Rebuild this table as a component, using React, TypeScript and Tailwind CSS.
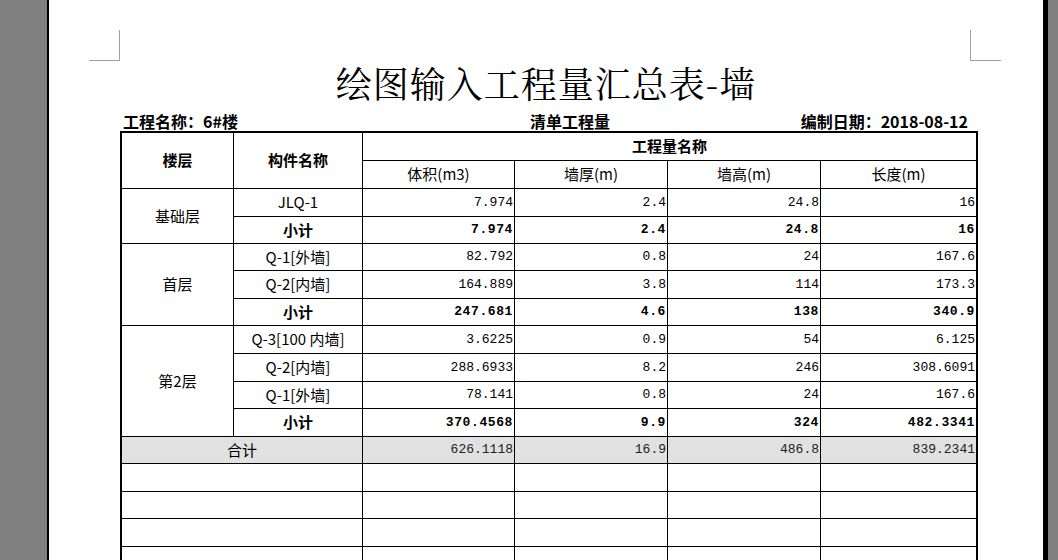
import React from 'react';

type Floor = {
  name: string;
  items: { part: string; values: string[] }[];
  subtotal: string[];
};

const floors: Floor[] = [
  {
    name: '基础层',
    items: [{ part: 'JLQ-1', values: ['7.974', '2.4', '24.8', '16'] }],
    subtotal: ['7.974', '2.4', '24.8', '16'],
  },
  {
    name: '首层',
    items: [
      { part: 'Q-1[外墙]', values: ['82.792', '0.8', '24', '167.6'] },
      { part: 'Q-2[内墙]', values: ['164.889', '3.8', '114', '173.3'] },
    ],
    subtotal: ['247.681', '4.6', '138', '340.9'],
  },
  {
    name: '第2层',
    items: [
      { part: 'Q-3[100 内墙]', values: ['3.6225', '0.9', '54', '6.125'] },
      { part: 'Q-2[内墙]', values: ['288.6933', '8.2', '246', '308.6091'] },
      { part: 'Q-1[外墙]', values: ['78.141', '0.8', '24', '167.6'] },
    ],
    subtotal: ['370.4568', '9.9', '324', '482.3341'],
  },
];

const total = ['626.1118', '16.9', '486.8', '839.2341'];

const cjk = "font-['Noto_Sans_CJK_SC',sans-serif]";
const mono = "font-['Liberation_Mono','Noto_Sans_CJK_SC',monospace]";

const spanRows: Record<number, string> = {
  2: 'row-span-2',
  3: 'row-span-3',
  4: 'row-span-4',
  5: 'row-span-5',
};

const NumCells = ({ values, bold = false, muted = false }: { values: string[]; bold?: boolean; muted?: boolean }) => (
  <>
    {values.map((v, i) => (
      <div
        key={i}
        className={`flex items-center justify-end pr-[1px] border-b border-black text-[13px] ${mono} ${
          i < 3 ? 'border-r' : ''
        } ${bold ? 'font-bold tracking-[0.6px] text-black' : muted ? 'text-[#222]' : 'text-black'} ${
          muted ? 'bg-[#e1e1e1]' : ''
        }`}
      >
        {v}
      </div>
    ))}
  </>
);

export default function App() {
  return (
    <div className="w-[1058px] h-[560px] overflow-hidden bg-[#808080] flex">
      <div className="w-[47px] shrink-0" />
      <div className="w-[1001px] shrink-0 h-full bg-white border-l-2 border-r-[5px] border-black">
        {/* crop marks */}
        <div className="flex justify-between pt-[30px] pl-[40px] pr-[42px]">
          <div className="w-[31px] h-[31px] border-r border-b border-[#a0a0a0]" />
          <div className="w-[31px] h-[31px] border-l border-b border-[#a0a0a0]" />
        </div>

        <h1
          className={`mt-[4px] h-[36px] text-center text-[36px] leading-[36px] tracking-[1px] font-normal text-black font-['Noto_Serif_CJK_SC','Noto_Sans_CJK_SC',serif]`}
        >
          绘图输入工程量汇总表-墙
        </h1>

        <div className="ml-[71px] w-[858px]">
          <div className={`mt-[12px] h-[16px] flex items-center text-[16px] leading-[16px] font-bold text-black ${cjk}`}>
            <span className="w-[410px] pl-[3px]">工程名称：6#楼</span>
            <span>清单工程量</span>
            <span className="ml-auto pr-[10px]">编制日期：2018-08-12</span>
          </div>

          <div
            className={`mt-[2px] grid grid-cols-[112px_129px_152px_153px_153px_155px] grid-rows-[28px_28px_28px_27px_27px_28px_27px_28px_28px_27px_28px_27px_28px_27px_28px_28px] border-2 border-black text-[15px] text-black ${cjk}`}
          >
            {/* header */}
            <div className="row-span-2 flex items-center justify-center border-r border-b border-black font-bold">楼层</div>
            <div className="row-span-2 flex items-center justify-center border-r border-b border-black font-bold">构件名称</div>
            <div className="col-span-4 flex items-center justify-center border-b border-black font-bold">工程量名称</div>
            {['体积(m3)', '墙厚(m)', '墙高(m)', '长度(m)'].map((h, i) => (
              <div key={h} className={`flex items-center justify-center border-b border-black ${i < 3 ? 'border-r' : ''}`}>
                {h}
              </div>
            ))}

            {floors.map((f) => (
              <React.Fragment key={f.name}>
                <div className={`${spanRows[f.items.length + 1]} flex items-center justify-center border-r border-b border-black`}>
                  {f.name}
                </div>
                {f.items.map((it, idx) => (
                  <React.Fragment key={idx}>
                    <div className="flex items-center justify-center border-r border-b border-black">{it.part}</div>
                    <NumCells values={it.values} />
                  </React.Fragment>
                ))}
                <div className="flex items-center justify-center border-r border-b border-black font-bold">小计</div>
                <NumCells values={f.subtotal} bold />
              </React.Fragment>
            ))}

            {/* total */}
            <div className="col-span-2 flex items-center justify-center border-r border-b border-black bg-[#e1e1e1]">合计</div>
            <NumCells values={total} muted />

            {/* empty rows */}
            {[0, 1, 2, 3].map((r) => (
              <React.Fragment key={r}>
                <div className="col-span-2 border-r border-b border-black" />
                <div className="border-r border-b border-black" />
                <div className="border-r border-b border-black" />
                <div className="border-r border-b border-black" />
                <div className="border-b border-black" />
              </React.Fragment>
            ))}
          </div>
        </div>
      </div>
    </div>
  );
}
